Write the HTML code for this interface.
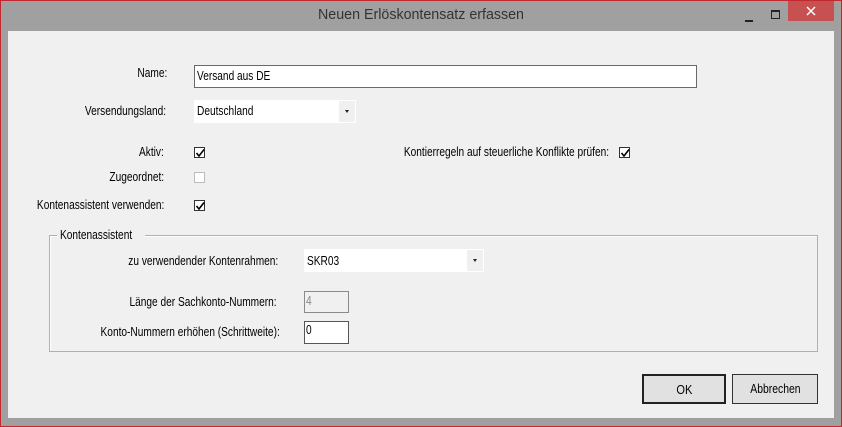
<!DOCTYPE html>
<html><head><meta charset="utf-8"><style>
*{margin:0;padding:0;box-sizing:border-box}
body{width:842px;height:427px;overflow:hidden;background:#a0a0a0;font-family:"Liberation Sans",sans-serif;font-size:13px;color:#000;position:relative}
#frame{position:absolute;left:0;top:0;width:842px;height:427px;border:1px solid #c4282f}
.a{position:absolute}
.t{position:absolute;white-space:nowrap;transform:scaleX(.78);line-height:14px}
.r{transform-origin:right center}
.l{transform-origin:left center}
#client{position:absolute;left:8px;top:31px;width:826px;height:387px;background:#f0f0f0}
.cb{position:absolute;width:11px;height:11px;border:1px solid #333;background:#fff}
.cb svg{position:absolute;left:0;top:0}
.box{position:absolute;background:#fff;border:1px solid #7a7a7a}
.btn{position:absolute;background:#e1e1e1;border:1px solid #adadad;text-align:center;line-height:27px}
</style></head><body>
<div id="frame"></div>
<div class="t" style="left:421px;top:8px;font-size:15px;color:#333;transform:translateX(-50%) scaleX(.95);transform-origin:center">Neuen Erlöskontensatz erfassen</div>
<div class="a" style="left:745px;top:20px;width:8px;height:2px;background:#222"></div>
<div class="a" style="left:771px;top:10px;width:9px;height:9px;border:1px solid #222;border-top-width:2px"></div>
<div class="a" style="left:788px;top:1px;width:46px;height:20px;background:#c75050"></div>
<svg class="a" style="left:806px;top:6px" width="10" height="10"><path d="M1 1L9 9M9 1L1 9" stroke="#fff" stroke-width="1.5"/></svg>
<div id="client"></div>

<div class="t r" style="right:675px;top:66px">Name:</div>
<div class="box" style="left:194px;top:65px;width:503px;height:23px;border-color:#6a6a6a"></div>
<div class="t l" style="left:197px;top:69px">Versand aus DE</div>

<div class="t r" style="right:676px;top:104px">Versendungsland:</div>
<div class="a" style="left:194px;top:100px;width:162px;height:23px;background:#fff"></div>
<div class="a" style="left:339px;top:101px;width:16px;height:21px;background:#f0f0f0"></div>
<div class="a" style="left:345px;top:110px;border:2.5px solid transparent;border-top:3px solid #222;border-bottom:0"></div>
<div class="t l" style="left:197px;top:104px">Deutschland</div>

<div class="t r" style="right:678px;top:145px">Aktiv:</div>
<div class="cb" style="left:194px;top:147px"><svg width="11" height="11"><path d="M1.5 5 L4 8 L9 1.5" stroke="#000" stroke-width="1.6" fill="none"/></svg></div>
<div class="t r" style="right:233px;top:145px">Kontierregeln auf steuerliche Konflikte prüfen:</div>
<div class="cb" style="left:619px;top:147px"><svg width="11" height="11"><path d="M1.5 5 L4 8 L9 1.5" stroke="#000" stroke-width="1.6" fill="none"/></svg></div>

<div class="t r" style="right:678px;top:170px">Zugeordnet:</div>
<div class="cb" style="left:194px;top:172px;border-color:#bcbcbc"></div>

<div class="t r" style="right:678px;top:198px">Kontenassistent verwenden:</div>
<div class="cb" style="left:194px;top:200px"><svg width="11" height="11"><path d="M1.5 5 L4 8 L9 1.5" stroke="#000" stroke-width="1.6" fill="none"/></svg></div>

<div class="a" style="left:49px;top:235px;width:769px;height:117px;border:1px solid #b0b0b0;box-shadow:inset 1px 1px 0 #fff"></div>
<div class="a" style="left:57px;top:228px;width:88px;height:14px;background:#f0f0f0"></div>
<div class="t l" style="left:60px;top:228px">Kontenassistent</div>

<div class="t r" style="right:564px;top:254px">zu verwendender Kontenrahmen:</div>
<div class="a" style="left:304px;top:249px;width:180px;height:23px;background:#fff"></div>
<div class="a" style="left:467px;top:250px;width:16px;height:21px;background:#f0f0f0"></div>
<div class="a" style="left:473px;top:259px;border:2.5px solid transparent;border-top:3px solid #222;border-bottom:0"></div>
<div class="t l" style="left:307px;top:254px">SKR03</div>

<div class="t r" style="right:565px;top:295px">Länge der Sachkonto-Nummern:</div>
<div class="a" style="left:304px;top:291px;width:45px;height:22px;border:1px solid #8a8a8a;background:#f0f0f0"></div>
<div class="t l" style="left:306px;top:294px;color:#888">4</div>

<div class="t r" style="right:562px;top:325px">Konto-Nummern erhöhen (Schrittweite):</div>
<div class="box" style="left:304px;top:321px;width:45px;height:23px;border-color:#555"></div>
<div class="t l" style="left:306px;top:323px">0</div>

<div class="btn" style="left:642px;top:374px;width:84px;height:30px;border:2px solid #222"><span style="display:inline-block;transform:scaleX(.85)">OK</span></div>
<div class="btn" style="left:732px;top:374px;width:86px;height:30px;border-color:#333"><span style="display:inline-block;transform:scaleX(.8)">Abbrechen</span></div>
</body></html>
